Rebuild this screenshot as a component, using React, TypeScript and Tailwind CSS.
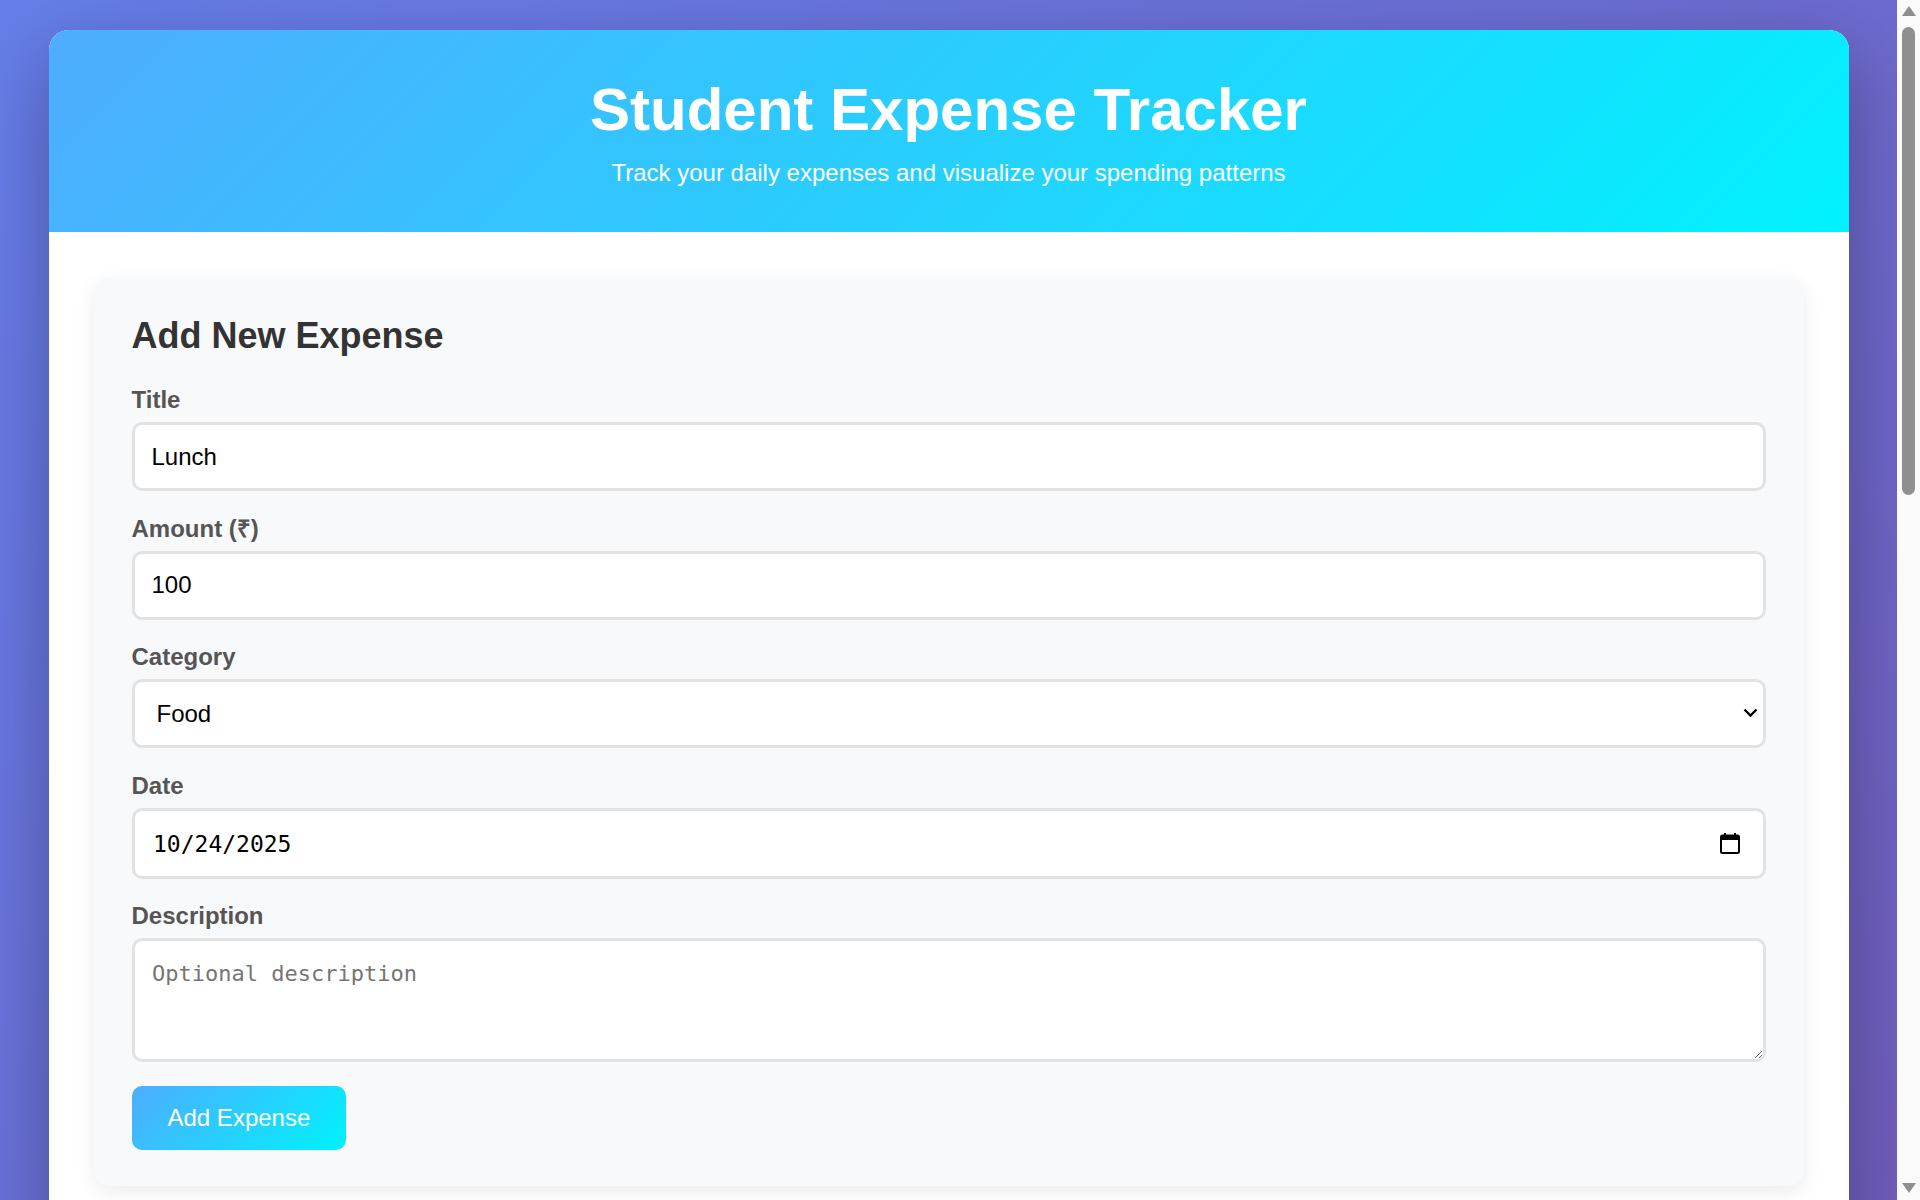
import React from "react";

const sans = { fontFamily: '"Liberation Sans", Arial, sans-serif' };
const mono = { fontFamily: '"DejaVu Sans Mono", "Liberation Mono", monospace' };

function Label({ children }: { children: React.ReactNode }) {
  return (
    <label className="block mb-2 text-[24px] leading-[28px] font-bold text-[#555555]">
      {children}
    </label>
  );
}

function CalendarIcon() {
  return (
    <svg width="20" height="21" viewBox="0 0 20 21" fill="none">
      <rect x="4" y="0" width="2" height="4" fill="#000" />
      <rect x="14" y="0" width="2" height="4" fill="#000" />
      <rect x="1" y="2.5" width="18" height="17.5" rx="1.5" stroke="#000" strokeWidth="2" />
      <rect x="1" y="2.5" width="18" height="4.5" fill="#000" />
    </svg>
  );
}

function Scrollbar() {
  return (
    <div className="flex w-[23px] shrink-0 flex-col items-center bg-[#fafafa] pt-[6px] pb-[7px]">
      <div className="h-0 w-0 border-x-[7px] border-b-[10px] border-x-transparent border-b-[#8f8f8f]" />
      <div className="mt-[11px] h-[468px] w-[13px] rounded-full bg-[#8f8f8f]" />
      <div className="flex-1" />
      <div className="h-0 w-0 border-x-[7px] border-t-[10px] border-x-transparent border-t-[#8f8f8f]" />
    </div>
  );
}

export default function App() {
  return (
    <div className="flex h-screen overflow-hidden" style={sans}>
      <main className="min-w-0 flex-1 overflow-hidden">
        <div className="py-[30px] bg-[linear-gradient(135deg,#667eea_0%,#764ba2_100%)]">
          <div className="mx-auto max-w-[1800px] min-h-[2903px] bg-white rounded-[20px] overflow-hidden shadow-[0_25px_75px_rgba(0,0,0,0.3)]">
            <header className="bg-[linear-gradient(135deg,#4facfe_0%,#00f2fe_100%)] text-center text-white pt-[45px] pb-[45px]">
              <h1 className="text-[60px] leading-[69px] font-bold">Student Expense Tracker</h1>
              <p className="mt-[15px] text-[24px] leading-[28px]">
                Track your daily expenses and visualize your spending patterns
              </p>
            </header>

            <div className="px-[45px] pt-[46px] pb-[45px]">
              <div className="rounded-[15px] bg-[#f8f9fa] shadow-[0_6px_20px_rgba(0,0,0,0.08)] px-[38px] pt-[36.5px] pb-[36px]">
                <h2 className="text-[36px] leading-[42px] font-bold text-[#333333] mb-[29.5px]">
                  Add New Expense
                </h2>

                <div className="flex flex-col gap-[23.6px]">
                  <div>
                    <Label>Title</Label>
                    <input
                      type="text"
                      defaultValue="Lunch"
                      className="block w-full h-[69px] rounded-[10px] border-[3px] border-solid border-[#e2e2e2] bg-white pl-[17px] pr-[16px] text-[24px] text-black outline-none"
                      style={sans}
                    />
                  </div>

                  <div>
                    <Label>Amount (₹)</Label>
                    <input
                      type="text"
                      defaultValue="100"
                      className="block w-full h-[69px] rounded-[10px] border-[3px] border-solid border-[#e2e2e2] bg-white pl-[17px] pr-[16px] text-[24px] text-black outline-none"
                      style={sans}
                    />
                  </div>

                  <div>
                    <Label>Category</Label>
                    <div className="relative">
                      <select
                        defaultValue="Food"
                        className="block w-full h-[69px] appearance-none rounded-[10px] border-[3px] border-solid border-[#e2e2e2] bg-white pl-[22px] pr-[40px] text-[24px] text-black outline-none"
                        style={sans}
                      >
                        <option>Food</option>
                        <option>Transport</option>
                        <option>Books</option>
                        <option>Entertainment</option>
                        <option>Other</option>
                      </select>
                      <svg
                        className="pointer-events-none absolute right-[8px] top-[29px]"
                        width="15"
                        height="10"
                        viewBox="0 0 15 10"
                        fill="none"
                      >
                        <path d="M1.5 1.5 L7.5 7.5 L13.5 1.5" stroke="#000" strokeWidth="2.4" />
                      </svg>
                    </div>
                  </div>

                  <div>
                    <Label>Date</Label>
                    <div className="flex h-[71px] w-full items-center justify-between rounded-[10px] border-[3px] border-solid border-[#e2e2e2] bg-white pl-[18.5px] pr-[22.5px]">
                      <span className="pt-[2px] text-[23px] text-black" style={mono}>
                        10/24/2025
                      </span>
                      <CalendarIcon />
                    </div>
                  </div>

                  <div>
                    <Label>Description</Label>
                    <textarea
                      placeholder="Optional description"
                      className="block w-full h-[124px] rounded-[10px] border-[3px] border-solid border-[#e2e2e2] bg-white pl-[17.5px] pr-[15px] pt-[16px] text-[22px] text-black placeholder:text-[#757575] outline-none"
                      style={mono}
                    />
                  </div>

                  <div>
                    <button
                      type="button"
                      className="rounded-[10px] bg-[linear-gradient(135deg,#4facfe_0%,#00f2fe_100%)] px-[36px] py-[18px] text-[24px] leading-[28px] text-white"
                      style={sans}
                    >
                      Add Expense
                    </button>
                  </div>
                </div>
              </div>
            </div>
          </div>
        </div>
      </main>
      <Scrollbar />
    </div>
  );
}
